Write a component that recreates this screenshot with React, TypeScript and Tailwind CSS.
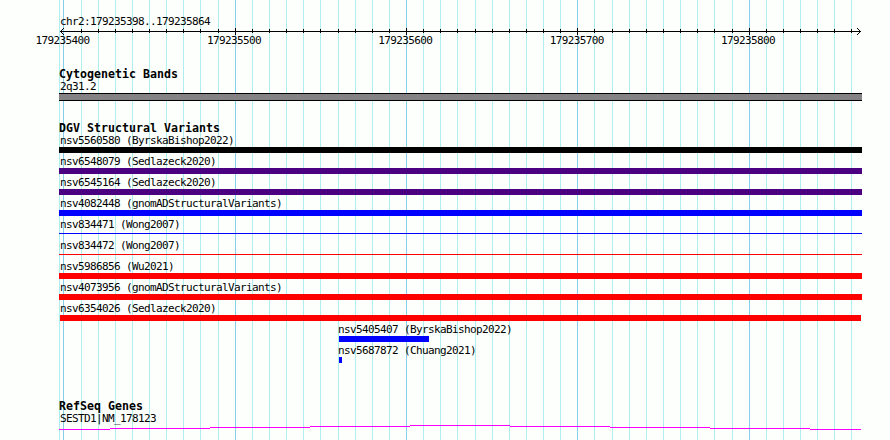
interface Variant {
  id: string;
  study: string;
  color: string;
  offset?: boolean;
  bar?: string;
}

const FULL = "w-[803px] h-1.5";
const THIN = "w-[803px] h-px mt-0.5";

const VARIANTS: Variant[] = [
  { id: "nsv5560580", study: "ByrskaBishop2022", color: "bg-black" },
  { id: "nsv6548079", study: "Sedlazeck2020", color: "bg-[#4b0082]" },
  { id: "nsv6545164", study: "Sedlazeck2020", color: "bg-[#4b0082]" },
  { id: "nsv4082448", study: "gnomADStructuralVariants", color: "bg-[#0000ff]" },
  { id: "nsv834471", study: "Wong2007", color: "bg-[#0000ff]", bar: THIN },
  { id: "nsv834472", study: "Wong2007", color: "bg-[#ff0000]", bar: THIN },
  { id: "nsv5986856", study: "Wu2021", color: "bg-[#ff0000]" },
  { id: "nsv4073956", study: "gnomADStructuralVariants", color: "bg-[#ff0000]" },
  { id: "nsv6354026", study: "Sedlazeck2020", color: "bg-[#ff0000]", bar: "ml-px w-[801px] h-1.5" },
  { id: "nsv5405407", study: "ByrskaBishop2022", color: "bg-[#0000ff]", offset: true, bar: "ml-[280px] w-[90px] h-1.5" },
  { id: "nsv5687872", study: "Chuang2021", color: "bg-[#0000ff]", offset: true, bar: "ml-[280px] w-[3px] h-1.5" },
];

const RULER_LABELS = ["179235400", "179235500", "179235600", "179235700", "179235800"];

// one tick every 10 bases, a major one every 100
const TICKS = Array.from({ length: 47 }, (_, i) => ({
  x: Math.floor(63.95 + i * 17.13),
  major: i % 10 === 0,
}));

const textBase =
  "font-['DejaVu_Sans_Mono',monospace] text-[11px] leading-3 tracking-[-0.622px] whitespace-pre text-black";
const headingBase =
  "mb-px font-['DejaVu_Sans_Mono',monospace] text-[11.6px] leading-3 tracking-[0.016px] font-bold whitespace-pre text-black";

function Grid() {
  return (
    <svg className="absolute inset-0" width="890" height="440" shapeRendering="crispEdges">
      <rect x="59" y="0" width="1" height="440" fill="#afeeee" />
      {TICKS.map((t) => (
        <rect key={t.x} x={t.x} y="0" width="1" height="440" fill={t.major ? "#87ceeb" : "#afeeee"} />
      ))}
    </svg>
  );
}

function Ruler() {
  return (
    <svg className="block" width="890" height="7" shapeRendering="crispEdges">
      <rect x="60" y="3" width="801" height="1" />
      {TICKS.slice(1).map((t) => (
        <rect key={t.x} x={t.x} y={t.major ? 0 : 1} width="1" height={t.major ? 7 : 4} />
      ))}
      {[1, 2, 3].map((d) => (
        <g key={d}>
          <rect x={60 + d} y={3 - d} width="1" height="1" />
          <rect x={60 + d} y={3 + d} width="1" height="1" />
          <rect x={860 - d} y={3 - d} width="1" height="1" />
          <rect x={860 - d} y={3 + d} width="1" height="1" />
        </g>
      ))}
    </svg>
  );
}

function VariantRow({ variant }: { variant: Variant }) {
  return (
    <div className="h-[21px]">
      <p className={`${textBase} ${variant.offset ? "pl-[279px]" : "pl-px"}`}>
        {variant.id} ({variant.study})
      </p>
      <div className="flex h-1.5 items-start">
        <div className={`${variant.bar ?? FULL} ${variant.color}`} />
      </div>
    </div>
  );
}

function GeneModel() {
  return (
    <svg className="block" width="803" height="5" shapeRendering="crispEdges" fill="#ff00ff">
      <rect x="0" y="4" width="51" height="1" />
      <rect x="51" y="3" width="100" height="1" />
      <rect x="151" y="2" width="100" height="1" />
      <rect x="251" y="1" width="100" height="1" />
      <rect x="351" y="0" width="100" height="1" />
      <rect x="451" y="1" width="100" height="1" />
      <rect x="551" y="2" width="100" height="1" />
      <rect x="651" y="3" width="100" height="1" />
      <rect x="751" y="4" width="51" height="1" />
    </svg>
  );
}

export default function App() {
  return (
    <div className="relative h-[440px] w-[890px] overflow-hidden bg-[#fdfffc]">
      <Grid />
      <div className="relative flex flex-col pt-4">
        <p className={`${textBase} pl-[60px]`}>chr2:179235398..179235864</p>
        <Ruler />
        <div className="flex h-3 pl-[35.5px]">
          {RULER_LABELS.map((label) => (
            <span key={label} className={`${textBase} w-[171.4px] shrink-0`}>
              {label}
            </span>
          ))}
        </div>

        <section className="mt-[21px] pl-[59px]">
          <h2 className={headingBase}>Cytogenetic Bands</h2>
          <p className={`${textBase} pl-px`}>2q31.2</p>
          <div className="h-2 w-[803px] border-y border-black bg-[#848284]" />
        </section>

        <section className="mt-[21px] pl-[59px]">
          <h2 className={headingBase}>DGV Structural Variants</h2>
          {VARIANTS.map((v) => (
            <VariantRow key={v.id} variant={v} />
          ))}
        </section>

        <section className="mt-[34px] pl-[59px]">
          <h2 className={headingBase}>RefSeq Genes</h2>
          <p className={`${textBase} pl-px`}>SESTD1|NM_178123</p>
          <GeneModel />
        </section>
      </div>
    </div>
  );
}
